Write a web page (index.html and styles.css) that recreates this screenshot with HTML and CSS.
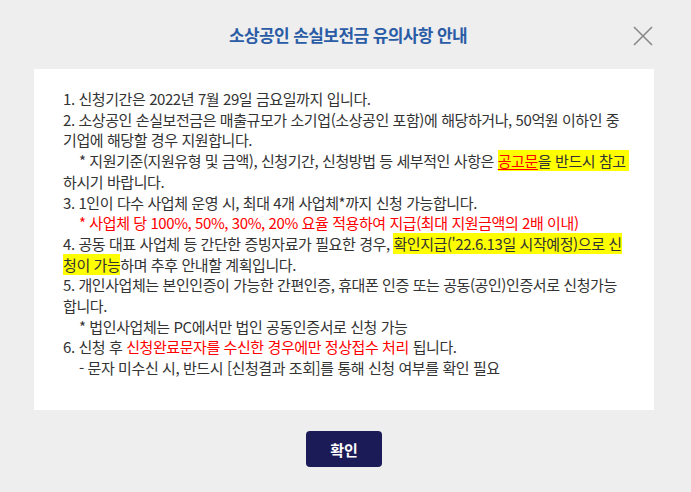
FILE: index.html
```html
<!DOCTYPE html>
<html lang="ko">
<head>
    <meta charset="UTF-8">
    <title>소상공인 손실보전금 유의사항 안내</title>
    <link rel="stylesheet" href="styles.css">
</head>
<body>
    <div class="popup">
        <div class="popup-head">
            <h2>소상공인 손실보전금 유의사항 안내</h2>
            <button class="close-btn" aria-label="닫기">
                <svg width="20" height="20" viewBox="0 0 20 20"><path d="M1 1L19 19M19 1L1 19" stroke="#888" stroke-width="1.6" fill="none"/></svg>
            </button>
        </div>
        <div class="popup-body">
            <p>1. 신청기간은 2022년 7월 29일 금요일까지 입니다.</p>
            <p>2. 소상공인 손실보전금은 매출규모가 소기업(소상공인 포함)에 해당하거나, 50억원 이하인 중<br>기업에 해당할 경우 지원합니다.</p>
            <p class="sub">* 지원기준(지원유형 및 금액), 신청기간, 신청방법 등 세부적인 사항은 <span class="mark"><u class="red">공고문</u>을 반드시 참고&nbsp;</span><br><span class="back">하시기 바랍니다.</span></p>
            <p>3. 1인이 다수 사업체 운영 시, 최대 4개 사업체*까지 신청 가능합니다.</p>
            <p class="sub red">* 사업체 당 100%, 50%, 30%, 20% 요율 적용하여 지급(최대 지원금액의 2배 이내)</p>
            <p>4. 공동 대표 사업체 등 간단한 증빙자료가 필요한 경우, <span class="mark">확인지급('22.6.13일 시작예정)으로 신</span><br><span class="mark">청이 가능</span>하며 추후 안내할 계획입니다.</p>
            <p>5. 개인사업체는 본인인증이 가능한 간편인증, 휴대폰 인증 또는 공동(공인)인증서로 신청가능<br>합니다.</p>
            <p class="sub">* 법인사업체는 PC에서만 법인 공동인증서로 신청 가능</p>
            <p>6. 신청 후 <span class="red">신청완료문자를 수신한 경우에만 정상접수 처리</span> 됩니다.</p>
            <p class="sub">- 문자 미수신 시, 반드시 [신청결과 조회]를 통해 신청 여부를 확인 필요</p>
        </div>
        <div class="popup-foot">
            <button class="ok-btn">확인</button>
        </div>
    </div>
</body>
</html>
```

FILE: styles.css
```css
body {
    margin: 0;
    background-color: #eeeeee;
    font-family: "Noto Sans CJK KR", "Noto Sans", sans-serif;
}
.popup {
    width: 691px;
    height: 492px;
    box-sizing: border-box;
    padding: 0 37px 0 34px;
}
.popup-head {
    height: 69px;
    display: flex;
    align-items: center;
    justify-content: center;
    position: relative;
}
.popup-head h2 {
    margin: 0 0 0 8px;
    font-size: 17px;
    font-weight: 700;
    letter-spacing: -0.6px;
    color: #2a5ca6;
}
.close-btn {
    position: absolute;
    right: 1px;
    top: 26px;
    border: none;
    background: none;
    padding: 0;
    width: 20px;
    height: 20px;
    cursor: pointer;
}
.popup-body {
    background: #ffffff;
    height: 341px;
    box-sizing: border-box;
    padding: 20px 20px 0 29px;
    font-size: 15px;
    line-height: 20.7px;
    letter-spacing: -0.42px;
    color: #333333;
}
.popup-body p {
    margin: 0;
    white-space: nowrap;
}
.popup-body .sub {
    padding-left: 16px;
}
.popup-body .sub .back {
    margin-left: -16px;
}
.red {
    color: #ff0000;
}
u.red {
    text-decoration-thickness: 1px;
    text-underline-offset: 2px;
}
.mark {
    background: #ffff00;
}
.popup-foot {
    display: flex;
    justify-content: center;
    padding-top: 21px;
}
.ok-btn {
    width: 76px;
    height: 36px;
    border: none;
    border-radius: 4px;
    background: #1b1c57;
    color: #ffffff;
    font-family: inherit;
    font-size: 15px;
    font-weight: 700;
    cursor: pointer;
}
```
